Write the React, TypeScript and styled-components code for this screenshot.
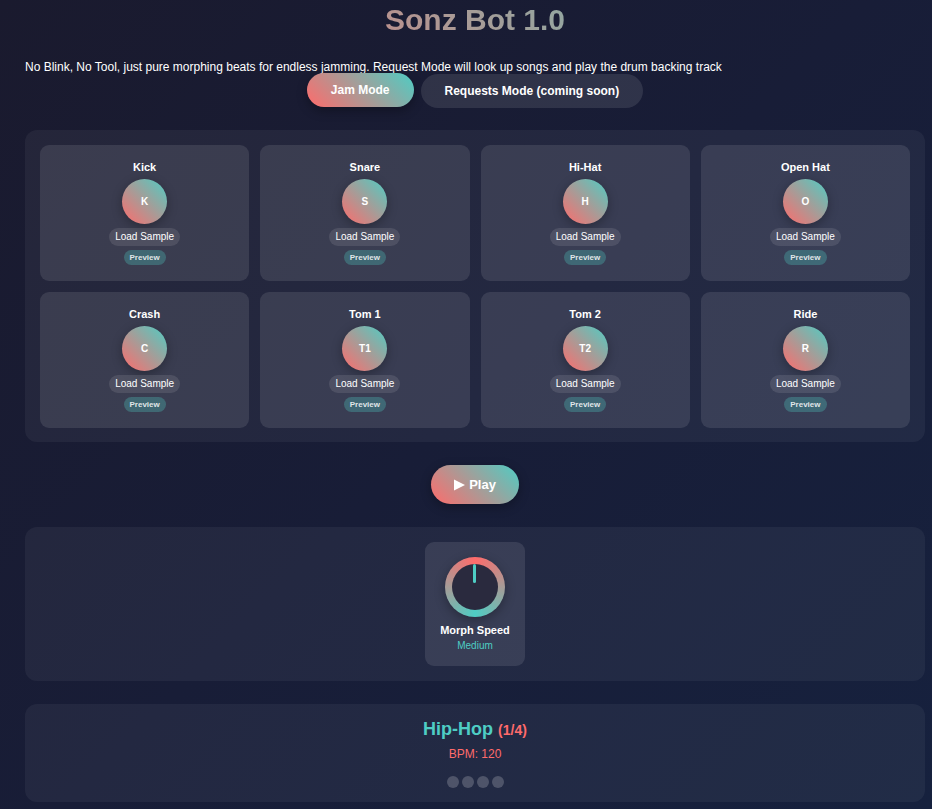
import React, { useState } from "react";
import styled, { createGlobalStyle, css } from "styled-components";

const coral = "#ff6b6b";
const teal = "#4ecdc4";
const accent = `linear-gradient(45deg, ${coral}, ${teal})`;

const GlobalStyle = createGlobalStyle`
  * { box-sizing: border-box; }
  html { min-height: 100%; background: linear-gradient(135deg, #1a1a2e 0%, #181d37 50%, #16213e 100%); }
  body {
    margin: 0;
    color: #fff;
    font-family: "Liberation Sans", Arial, sans-serif;
    font-size: 12px;
    line-height: 14px;
  }
  button { font-family: inherit; color: inherit; border: 0; cursor: pointer; }
`;

const Page = styled.main`
  padding: 3px 7px 7px 25px;
`;

const Title = styled.h1`
  margin: 0 0 23px;
  font-size: 30px;
  line-height: 34px;
  text-align: center;
  color: transparent;
  background: ${accent};
  background-clip: text;
  -webkit-background-clip: text;
`;

const Intro = styled.p`
  margin: 0;
`;

const Modes = styled.nav`
  display: flex;
  justify-content: center;
  gap: 7px;
  margin-bottom: 22px;
`;

const ModeButton = styled.button<{ $active: boolean }>`
  padding: 10px 24px;
  border-radius: 18px;
  font-size: 12px;
  font-weight: bold;
  line-height: 14px;
  background: rgba(255, 255, 255, 0.1);
  ${(p) =>
    p.$active &&
    css`
      background: ${accent};
      box-shadow: 0 4px 11px rgba(0, 0, 0, 0.3);
      transform: translateY(-1px);
    `}
`;

const Panel = styled.section`
  margin-bottom: 23px;
  padding: 15px 15px 14px;
  border-radius: 12px;
  background: rgba(255, 255, 255, 0.05);
`;

const PadGrid = styled(Panel)`
  display: grid;
  grid-template-columns: repeat(4, 1fr);
  gap: 11px;
`;

const PadCard = styled.article`
  display: flex;
  flex-direction: column;
  align-items: center;
  gap: 4px;
  padding: 15px 15px 16px;
  border-radius: 9px;
  background: rgba(255, 255, 255, 0.1);
`;

const PadName = styled.h2`
  margin: 0;
  font-size: 11px;
  line-height: 15px;
`;

const PadButton = styled.button`
  width: 45px;
  height: 45px;
  padding: 0;
  border-radius: 50%;
  font-size: 10px;
  font-weight: bold;
  background: ${accent};
  box-shadow: 0 3px 11px rgba(0, 0, 0, 0.3);
`;

const LoadButton = styled.button`
  padding: 3px 6px;
  border-radius: 9px;
  font-size: 10px;
  line-height: 12px;
  background: rgba(255, 255, 255, 0.1);
`;

const PreviewButton = styled.button`
  padding: 3px 6px;
  border-radius: 8px;
  font-size: 8px;
  font-weight: bold;
  line-height: 9px;
  color: rgba(255, 255, 255, 0.85);
  background: rgba(78, 205, 196, 0.3);
`;

const Transport = styled.div`
  display: flex;
  justify-content: center;
  margin-bottom: 23px;
`;

const PlayButton = styled.button`
  display: flex;
  align-items: center;
  gap: 4px;
  padding: 12px 23px;
  border-radius: 20px;
  font-size: 13px;
  font-weight: bold;
  line-height: 15px;
  background: ${accent};
  box-shadow: 0 3px 11px rgba(0, 0, 0, 0.3);
`;

const KnobPanel = styled(Panel)`
  display: flex;
  justify-content: center;
  padding: 15px;
`;

const KnobCard = styled.div`
  display: flex;
  flex-direction: column;
  align-items: center;
  padding: 15px;
  border-radius: 9px;
  background: rgba(255, 255, 255, 0.1);
`;

const Knob = styled.button`
  display: flex;
  width: 60px;
  height: 60px;
  margin-bottom: 7px;
  padding: 7px;
  border-radius: 50%;
  background: conic-gradient(${coral}, ${teal}, ${coral});
  box-shadow: 0 3px 11px rgba(0, 0, 0, 0.3);
`;

const KnobFace = styled.span`
  display: flex;
  justify-content: center;
  width: 46px;
  height: 46px;
  border-radius: 50%;
  background: #2a2a3e;
`;

const Pointer = styled.span`
  width: 3px;
  height: 19px;
  border-radius: 2px;
  background: ${teal};
`;

const KnobLabel = styled.span`
  margin-bottom: 3px;
  font-size: 11px;
  font-weight: bold;
  line-height: 13px;
`;

const KnobValue = styled.output`
  font-size: 10px;
  line-height: 11px;
  color: ${teal};
`;

const Status = styled(Panel)`
  display: flex;
  flex-direction: column;
  align-items: center;
  margin-bottom: 0;
`;

const Style = styled.h2`
  margin: 0 0 6px;
  font-size: 18px;
  line-height: 21px;
  color: ${teal};
`;

const Bar = styled.span`
  font-size: 14px;
  color: ${coral};
`;

const Tempo = styled.p`
  margin: 0 0 15px;
  color: ${coral};
`;

const Beats = styled.div`
  display: flex;
  gap: 3px;
`;

const Beat = styled.span`
  width: 12px;
  height: 12px;
  border-radius: 50%;
  background: rgba(255, 255, 255, 0.2);
`;

const pads = [
  { name: "Kick", key: "K" },
  { name: "Snare", key: "S" },
  { name: "Hi-Hat", key: "H" },
  { name: "Open Hat", key: "O" },
  { name: "Crash", key: "C" },
  { name: "Tom 1", key: "T1" },
  { name: "Tom 2", key: "T2" },
  { name: "Ride", key: "R" },
];

const speeds = ["Medium", "Fast", "Slow"];

export default function App() {
  const [mode, setMode] = useState("jam");
  const [speed, setSpeed] = useState(0);

  return (
    <>
      <GlobalStyle />
      <Page>
        <Title>Sonz Bot 1.0</Title>
        <Intro>
          No Blink, No Tool, just pure morphing beats for endless jamming. Request Mode will look up songs and play the
          drum backing track
        </Intro>
        <Modes>
          <ModeButton type="button" $active={mode === "jam"} onClick={() => setMode("jam")}>
            Jam Mode
          </ModeButton>
          <ModeButton type="button" $active={mode === "requests"} onClick={() => setMode("requests")}>
            Requests Mode (coming soon)
          </ModeButton>
        </Modes>
        <PadGrid>
          {pads.map((pad) => (
            <PadCard key={pad.name}>
              <PadName>{pad.name}</PadName>
              <PadButton type="button">{pad.key}</PadButton>
              <LoadButton type="button">Load Sample</LoadButton>
              <PreviewButton type="button">Preview</PreviewButton>
            </PadCard>
          ))}
        </PadGrid>
        <Transport>
          <PlayButton type="button">
            <svg width="11" height="12" viewBox="0 0 11 12" aria-hidden="true">
              <path d="M0 0.5 L11 6 L0 11.5 Z" fill="#fff" />
            </svg>
            Play
          </PlayButton>
        </Transport>
        <KnobPanel>
          <KnobCard>
            <Knob type="button" aria-labelledby="morph-speed" onClick={() => setSpeed((speed + 1) % speeds.length)}>
              <KnobFace>
                <Pointer />
              </KnobFace>
            </Knob>
            <KnobLabel id="morph-speed">Morph Speed</KnobLabel>
            <KnobValue>{speeds[speed]}</KnobValue>
          </KnobCard>
        </KnobPanel>
        <Status>
          <Style>
            Hip-Hop <Bar>(1/4)</Bar>
          </Style>
          <Tempo>BPM: 120</Tempo>
          <Beats>
            <Beat />
            <Beat />
            <Beat />
            <Beat />
          </Beats>
        </Status>
      </Page>
    </>
  );
}
